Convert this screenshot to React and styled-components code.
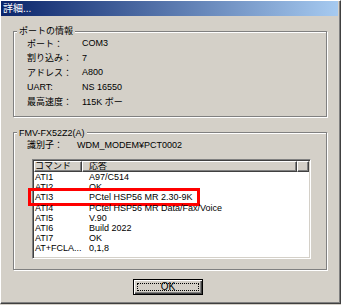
import React from 'react';
import styled, { createGlobalStyle } from 'styled-components';

const GlobalStyle = createGlobalStyle`
  html, body {
    margin: 0;
    padding: 0;
    background: #d4d0c8;
  }
  body {
    font-family: "Liberation Sans", "Noto Sans CJK JP", sans-serif;
    font-size: 9px;
    color: #000;
  }
`;

const Window = styled.div`
  box-sizing: border-box;
  width: 341px;
  height: 304px;
  background: #d4d0c8;
  border-top: 1px solid #fff;
  border-left: 1px solid #fff;
  border-right: 1px solid #404040;
  border-bottom: 1px solid #404040;
  box-shadow: inset -1px -1px 0 #808080;
  padding-right: 2px;
  display: flex;
  flex-direction: column;
`;

const TitleBar = styled.div`
  height: 15px;
  background: linear-gradient(to right, #0a246a, #a6caf0);
  color: #fff;
  font-size: 10px;
  line-height: 15px;
  padding-left: 2px;
`;

const Group = styled.fieldset`
  box-sizing: border-box;
  width: 314px;
  margin: ${({ $top }) => $top}px 0 0 12px;
  padding: 0 0 ${({ $bottom }) => $bottom}px 13px;
  border: 1px solid #808080;
  box-shadow: 1px 1px 0 #fff, inset 1px 1px 0 #fff;
  min-width: 0;
`;

const Legend = styled.legend`
  margin-left: -10px;
  padding: 0 2px;
  line-height: 12px;
  background: #d4d0c8;
`;

const InfoGrid = styled.div`
  display: grid;
  grid-template-columns: ${({ $label }) => $label}px 1fr;
  grid-auto-rows: ${({ $row }) => $row}px;
  align-items: center;
  margin-top: -1px;
`;

const List = styled.div`
  box-sizing: border-box;
  width: 279px;
  height: 100px;
  margin: 7px 0 0 5px;
  background: #fff;
  border-top: 1px solid #808080;
  border-left: 1px solid #808080;
  border-right: 1px solid #fff;
  border-bottom: 1px solid #fff;
  box-shadow: inset 1px 1px 0 #404040, inset -1px -1px 0 #d4d0c8;
  padding: 1px;
`;

const Header = styled.div`
  display: grid;
  grid-template-columns: 48px 215px 12px;
  height: 11px;
`;

const HeaderCell = styled.div`
  box-sizing: border-box;
  background: #d4d0c8;
  border-top: 1px solid #fff;
  border-left: 1px solid #fff;
  border-right: 1px solid #404040;
  border-bottom: 1px solid #404040;
  box-shadow: inset -1px -1px 0 #808080;
  line-height: 9px;
  padding-left: ${({ $pad }) => $pad}px;
  overflow: hidden;
  white-space: nowrap;
`;

const Row = styled.div`
  position: relative;
  display: grid;
  grid-template-columns: 48px 215px;
  height: 10.2px;
  line-height: 10.2px;
  white-space: nowrap;
`;

const Cell = styled.div`
  padding-left: ${({ $pad }) => $pad}px;
`;

const Highlight = styled.div`
  position: absolute;
  top: -4px;
  bottom: -3px;
  left: -6px;
  width: 172px;
  box-sizing: border-box;
  border: 3px solid #f00;
`;

const ButtonBar = styled.div`
  display: flex;
  justify-content: center;
  padding: 9px 3px 0 0;
`;

const Button = styled.button`
  box-sizing: border-box;
  width: 70px;
  height: 16px;
  padding: 0;
  background: #d4d0c8;
  border: 1px solid #000;
  box-shadow: inset 1px 1px 0 #fff, inset -1px -1px 0 #404040, inset -2px -2px 0 #808080;
  font: inherit;
  font-size: 10px;
  color: #000;
  display: flex;
  align-items: stretch;
  justify-content: stretch;
`;

const FocusRing = styled.span`
  flex: 1;
  margin: 3px;
  border: 1px dotted #000;
  line-height: 6px;
  display: flex;
  align-items: center;
  justify-content: center;
`;

const portInfo = [
  ['ポート：', 'COM3'],
  ['割り込み：', '7'],
  ['アドレス：', 'A800'],
  ['UART:', 'NS 16550'],
  ['最高速度：', '115K ボー'],
];

const responses = [
  ['ATI1', 'A97/C514'],
  ['ATI2', 'OK'],
  ['ATI3', 'PCtel HSP56 MR 2.30-9K', true],
  ['ATI4', 'PCtel HSP56 MR Data/Fax/Voice'],
  ['ATI5', 'V.90'],
  ['ATI6', 'Build 2022'],
  ['ATI7', 'OK'],
  ['AT+FCLA...', '0,1,8'],
];

const App = () => (
  <>
    <GlobalStyle />
    <Window>
      <TitleBar>詳細...</TitleBar>

      <Group $top={9} $bottom={7}>
        <Legend>ポートの情報</Legend>
        <InfoGrid $label={55} $row={14.6}>
          {portInfo.map(([label, value]) => (
            <React.Fragment key={label}>
              <span>{label}</span>
              <span>{value}</span>
            </React.Fragment>
          ))}
        </InfoGrid>
      </Group>

      <Group $top={10} $bottom={10}>
        <Legend>FMV-FX52Z2(A)</Legend>
        <InfoGrid $label={50} $row={14}>
          <span>識別子：</span>
          <span>WDM_MODEM¥PCT0002</span>
        </InfoGrid>
        <List>
          <Header>
            <HeaderCell $pad={0}>コマンド</HeaderCell>
            <HeaderCell $pad={6}>応答</HeaderCell>
            <HeaderCell $pad={0} />
          </Header>
          {responses.map(([cmd, answer, marked]) => (
            <Row key={cmd}>
              <Cell $pad={1}>{cmd}</Cell>
              <Cell $pad={7}>{answer}</Cell>
              {marked && <Highlight />}
            </Row>
          ))}
        </List>
      </Group>

      <ButtonBar>
        <Button>
          <FocusRing>OK</FocusRing>
        </Button>
      </ButtonBar>
    </Window>
  </>
);

export default App;
